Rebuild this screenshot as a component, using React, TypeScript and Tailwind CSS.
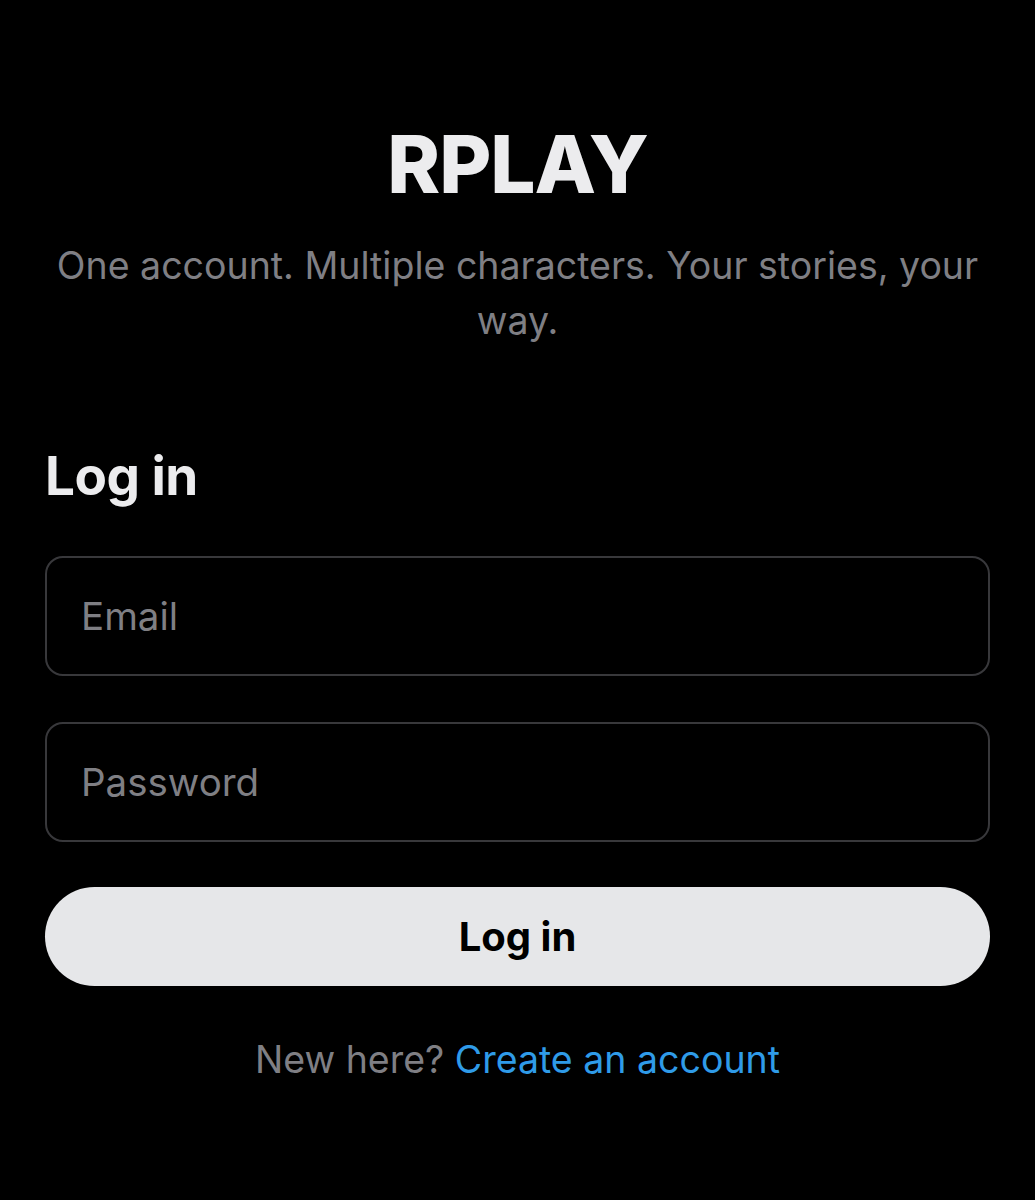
export default function App() {
  return (
    <div
      className="min-h-[1200px] w-full bg-black px-[45px] pt-[114px]"
      style={{ fontFamily: 'Inter, "Noto Sans", sans-serif' }}
    >
      <div className="flex flex-col items-center text-center">
        <h1 className="text-[80px] leading-[100px] font-extrabold tracking-[-1px] text-[#ececee]">RPLAY</h1>
        <p className="mt-[24px] text-[37.5px] leading-[55px] text-[#7f7f84]">
          One account. Multiple characters. Your stories, your way.
        </p>
      </div>

      <h2 className="mt-[98px] text-[53px] leading-[60px] font-bold tracking-[-0.5px] text-[#ececee]">Log in</h2>

      <div className="mt-[50px] flex flex-col gap-[46px]">
        <input
          type="email"
          placeholder="Email"
          className="h-[120px] w-full rounded-[18px] border-[2.5px] border-[#38383b] bg-black px-[34px] text-[38.5px] text-white outline-none placeholder:text-[#7f7f84]"
        />
        <input
          type="password"
          placeholder="Password"
          className="h-[120px] w-full rounded-[18px] border-[2.5px] border-[#38383b] bg-black px-[34px] text-[38.5px] text-white outline-none placeholder:text-[#7f7f84]"
        />
      </div>

      <button className="mt-[45px] h-[99px] w-full rounded-full bg-[#e6e7e9] text-[40px] font-bold text-black">
        Log in
      </button>

      <p className="mt-[46px] text-center text-[37.5px] leading-[56px] text-[#7f7f84]">
        New here? <a className="text-[#2f9be8]">Create an account</a>
      </p>
    </div>
  )
}
